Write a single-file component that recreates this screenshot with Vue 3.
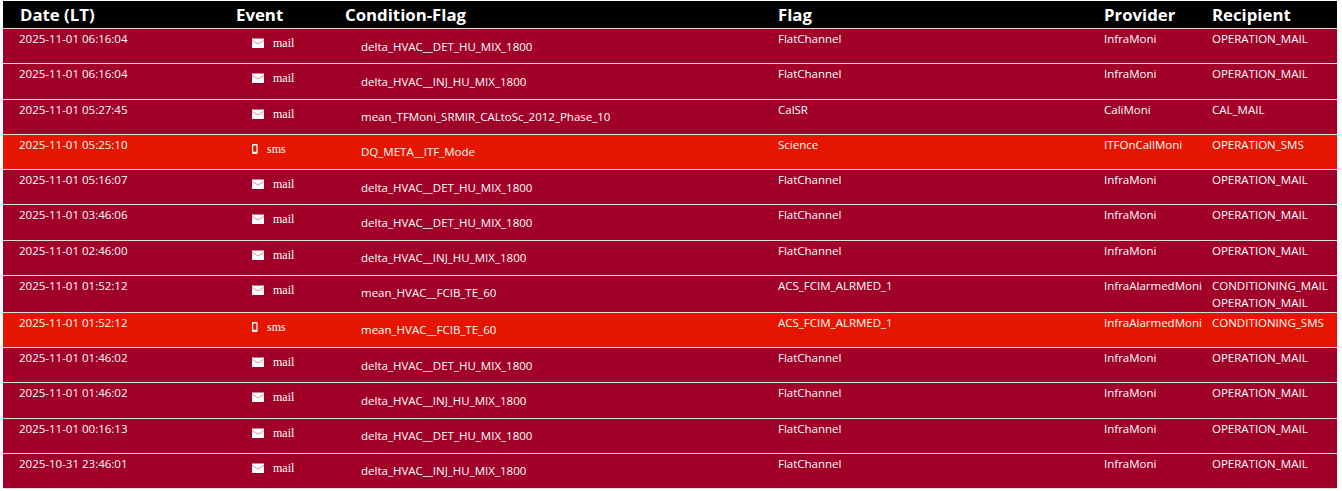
<script setup>
const M = 'mail'
const S = 'sms'
const rows = [
  ['2025-11-01 06:16:04', M, 'delta_HVAC__DET_HU_MIX_1800', 'FlatChannel', 'InfraMoni', ['OPERATION_MAIL']],
  ['2025-11-01 06:16:04', M, 'delta_HVAC__INJ_HU_MIX_1800', 'FlatChannel', 'InfraMoni', ['OPERATION_MAIL']],
  ['2025-11-01 05:27:45', M, 'mean_TFMoni_SRMIR_CALtoSc_2012_Phase_10', 'CalSR', 'CaliMoni', ['CAL_MAIL']],
  ['2025-11-01 05:25:10', S, 'DQ_META__ITF_Mode', 'Science', 'ITFOnCallMoni', ['OPERATION_SMS']],
  ['2025-11-01 05:16:07', M, 'delta_HVAC__DET_HU_MIX_1800', 'FlatChannel', 'InfraMoni', ['OPERATION_MAIL']],
  ['2025-11-01 03:46:06', M, 'delta_HVAC__DET_HU_MIX_1800', 'FlatChannel', 'InfraMoni', ['OPERATION_MAIL']],
  ['2025-11-01 02:46:00', M, 'delta_HVAC__INJ_HU_MIX_1800', 'FlatChannel', 'InfraMoni', ['OPERATION_MAIL']],
  ['2025-11-01 01:52:12', M, 'mean_HVAC__FCIB_TE_60', 'ACS_FCIM_ALRMED_1', 'InfraAlarmedMoni', ['CONDITIONING_MAIL', 'OPERATION_MAIL']],
  ['2025-11-01 01:52:12', S, 'mean_HVAC__FCIB_TE_60', 'ACS_FCIM_ALRMED_1', 'InfraAlarmedMoni', ['CONDITIONING_SMS']],
  ['2025-11-01 01:46:02', M, 'delta_HVAC__DET_HU_MIX_1800', 'FlatChannel', 'InfraMoni', ['OPERATION_MAIL']],
  ['2025-11-01 01:46:02', M, 'delta_HVAC__INJ_HU_MIX_1800', 'FlatChannel', 'InfraMoni', ['OPERATION_MAIL']],
  ['2025-11-01 00:16:13', M, 'delta_HVAC__DET_HU_MIX_1800', 'FlatChannel', 'InfraMoni', ['OPERATION_MAIL']],
  ['2025-10-31 23:46:01', M, 'delta_HVAC__INJ_HU_MIX_1800', 'FlatChannel', 'InfraMoni', ['OPERATION_MAIL']],
]
</script>

<template>
  <div class="page">
    <table class="alerts">
      <colgroup>
        <col class="c-date" />
        <col class="c-event" />
        <col class="c-cond" />
        <col class="c-flag" />
        <col class="c-prov" />
        <col class="c-rec" />
      </colgroup>
      <thead>
        <tr>
          <th class="first">Date (LT)</th>
          <th>Event</th>
          <th>Condition-Flag</th>
          <th>Flag</th>
          <th>Provider</th>
          <th>Recipient</th>
        </tr>
      </thead>
      <tbody>
        <tr v-for="(r, i) in rows" :key="i" :class="r[1]">
          <td class="first">{{ r[0] }}</td>
          <td class="event">
            <span class="event-in">
              <svg v-if="r[1] === 'mail'" class="ic-mail" viewBox="0 0 12 10" width="12" height="10">
                <path d="M0 .5h12V10H0z" fill="#fff" />
                <path d="M0 2.4l6 3.6 6-3.6" fill="none" stroke="#e38da3" stroke-width="1" />
              </svg>
              <svg v-else class="ic-sms" viewBox="0 0 6 10" width="6" height="10">
                <path fill-rule="evenodd" d="M1 0h3.6a1 1 0 0 1 1 1v8a1 1 0 0 1-1 1H1a1 1 0 0 1-1-1V1a1 1 0 0 1 1-1zm.2 1.6v6.2h3.2V1.6z" fill="#fff" />
              </svg>
              <span class="ev-label">{{ r[1] }}</span>
            </span>
          </td>
          <td class="cond">{{ r[2] }}</td>
          <td>{{ r[3] }}</td>
          <td>{{ r[4] }}</td>
          <td class="rec"><div v-for="t in r[5]" :key="t" class="rec-line">{{ t }}</div></td>
        </tr>
      </tbody>
    </table>
  </div>
</template>

<style>
html, body { margin: 0; background: #fff; }
</style>

<style scoped>
.page {
  padding: 1px 5px 0 3px;
  font-family: "Open Sans", "Noto Sans", sans-serif;
  color: #fff;
}
.alerts {
  width: 1334px;
  table-layout: fixed;
  border-collapse: collapse;
}
.c-date { width: 233px; }
.c-event { width: 109px; }
.c-cond { width: 433px; }
.c-flag { width: 326px; }
.c-prov { width: 108px; }
.c-rec { width: 125px; }
th {
  background: #000;
  height: 27px;
  padding: 0;
  text-align: left;
  font-size: 16.8px;
  font-weight: 700;
  line-height: 27px;
}
th.first { padding-left: 17px; }
td {
  box-sizing: border-box;
  padding: 1px 0 0;
  height: 35.25px;
  vertical-align: top;
  font-size: 11.5px;
  line-height: 18px;
  border-top: 1px solid #ddd;
}
tbody tr:last-child td { border-bottom: 1px solid #ddd; }
tr.mail td { background: #a10028; }
tr.sms td { background: #e61500; }
td.first { padding-left: 16px; }
td.event { padding-left: 16px; padding-top: 5px; }
.event-in {
  display: flex;
  align-items: center;
}
.ic-mail { margin-right: 9px; }
.ic-sms { margin-right: 9px; }
.ev-label {
  font-family: "Liberation Serif", serif;
  font-size: 12px;
}
td.cond { padding-left: 16px; padding-top: 8.6px; }
.rec-line { line-height: 17.5px; }
</style>
